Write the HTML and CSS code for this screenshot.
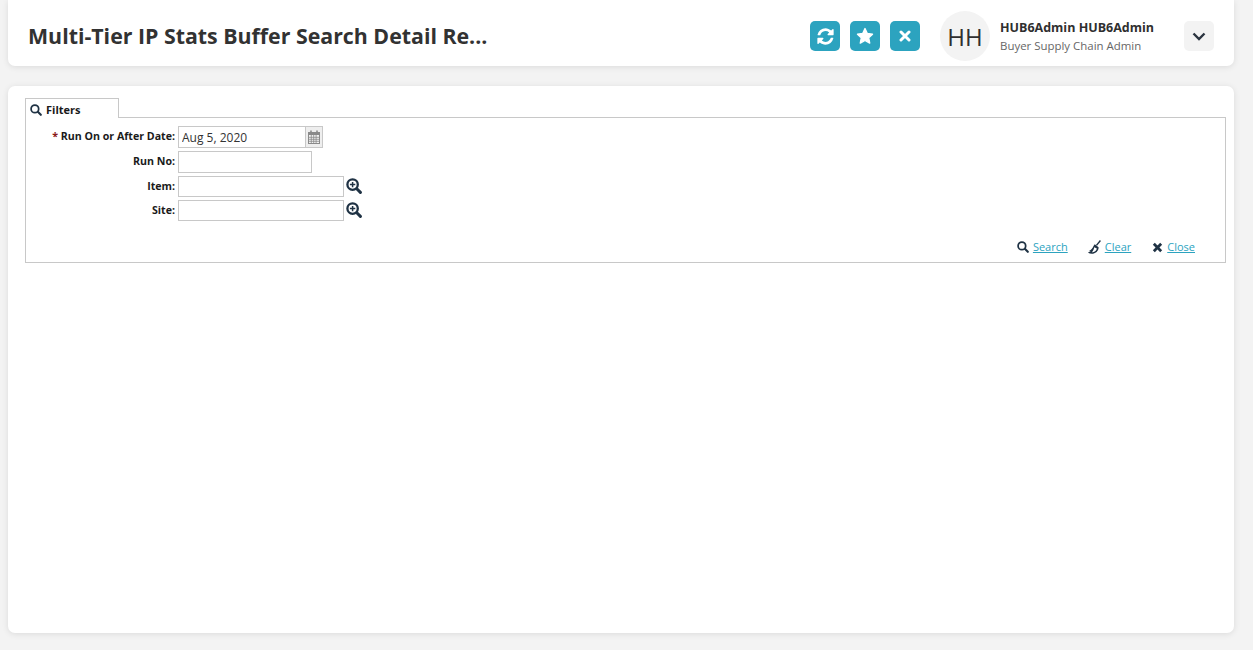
FILE: index.html
```html
<!DOCTYPE html>
<html lang="en">
<head>
<meta charset="utf-8">
<title>Multi-Tier IP Stats Buffer Search Detail Report</title>
<link rel="stylesheet" href="styles.css">
</head>
<body>
<header class="topbar">
  <h1 class="title">Multi-Tier IP Stats Buffer Search Detail Re...</h1>
  <div class="actions">
    <button class="action" type="button" aria-label="Refresh">
      <svg viewBox="0 0 1792 1792" width="19" height="19"><path fill="#fff" d="M1639 1056q0 5-1 7-64 268-268 434.500t-478 166.500q-146 0-282.500-55t-243.500-157l-129 129q-19 19-45 19t-45-19-19-45v-448q0-26 19-45t45-19h448q26 0 45 19t19 45-19 45l-137 137q71 66 161 102t187 36q134 0 250-65t186-179q11-17 53-117 8-23 30-23h192q13 0 22.500 9.500t9.500 22.500zm25-800v448q0 26-19 45t-45 19h-448q-26 0-45-19t-19-45 19-45l138-138q-148-137-349-137-134 0-250 65t-186 179q-11 17-53 117-8 23-30 23h-199q-13 0-22.500-9.500t-9.500-22.500v-7q65-268 270-434.500t480-166.500q146 0 284 55.500t245 156.500l130-129q19-19 45-19t45 19 19 45z"/></svg>
    </button>
    <button class="action" type="button" aria-label="Favorite">
      <svg viewBox="0 0 18 18" width="18" height="18"><path fill="#fff" stroke="#fff" stroke-width="1.400" stroke-linejoin="round" d="M9 1.600l2.300 4.900 5.200.7-3.800 3.600 1 5.300L9 13.500l-4.700 2.600 1-5.300-3.800-3.600 5.200-.7z"/></svg>
    </button>
    <button class="action" type="button" aria-label="Close">
      <svg viewBox="0 0 12 12" width="12" height="12"><path stroke="#fff" stroke-width="3" stroke-linecap="round" d="M2 2l8 8M10 2l-8 8"/></svg>
    </button>
  </div>
  <div class="avatar">HH</div>
  <div class="user">
    <div class="user-name">HUB6Admin HUB6Admin</div>
    <div class="user-role">Buyer Supply Chain Admin</div>
  </div>
  <button class="menu" type="button" aria-label="Menu">
    <svg viewBox="0 0 14 9" width="14" height="9"><path fill="none" stroke="#2b3440" stroke-width="2.400" d="M1.500 1.500L7 7l5.500-5.500"/></svg>
  </button>
</header>

<main class="panel">
  <div class="tab">
    <svg class="tab-icon" viewBox="0 0 13 13" width="12" height="12"><circle cx="5.300" cy="5.300" r="4.100" fill="none" stroke="#1f3244" stroke-width="1.900"/><path stroke="#1f3244" stroke-width="2.300" stroke-linecap="round" d="M8.500 8.500l3.200 3.200"/></svg>
    <span>Filters</span>
  </div>
  <section class="filters">
    <div class="row row-date">
      <label class="label"><span class="req">*</span> Run On or After Date:</label>
      <div class="date">
        <input class="field field-date" type="text" value="Aug 5, 2020">
        <span class="cal">
          <svg viewBox="0 0 14 14" width="14" height="14"><path fill="#8a8a8a" d="M1 2h12v12H1z"/><path fill="#f2f2f2" d="M2 5h10v8H2z"/><path stroke="#8a8a8a" stroke-width=".8" d="M2 7.300h10M2 9.300h10M2 11.300h10M4.300 5v8M6.700 5v8M9.100 5v8"/><path stroke="#8a8a8a" stroke-width="1.600" d="M4 .5v3M10 .5v3"/></svg>
        </span>
      </div>
    </div>
    <div class="row row-no">
      <label class="label">Run No:</label>
      <input class="field field-no" type="text">
    </div>
    <div class="row row-item">
      <label class="label label-low">Item:</label>
      <input class="field field-lookup" type="text">
      <svg class="lookup" viewBox="0 0 16 16" width="16" height="16"><circle cx="6.600" cy="6.600" r="5.200" fill="none" stroke="#1f3244" stroke-width="2.300"/><path stroke="#1f3244" stroke-width="3" stroke-linecap="round" d="M10.800 10.800l3.600 3.600"/><path stroke="#1f3244" stroke-width="1.500" d="M6.600 3.900v5.400M3.900 6.600h5.400"/></svg>
    </div>
    <div class="row row-site">
      <label class="label label-low">Site:</label>
      <input class="field field-lookup" type="text">
      <svg class="lookup" viewBox="0 0 16 16" width="16" height="16"><circle cx="6.600" cy="6.600" r="5.200" fill="none" stroke="#1f3244" stroke-width="2.300"/><path stroke="#1f3244" stroke-width="3" stroke-linecap="round" d="M10.800 10.800l3.600 3.600"/><path stroke="#1f3244" stroke-width="1.500" d="M6.600 3.900v5.400M3.900 6.600h5.400"/></svg>
    </div>
    <div class="links">
      <span class="link-item">
        <svg viewBox="0 0 13 13" width="12" height="12"><circle cx="5.300" cy="5.300" r="4.100" fill="none" stroke="#1f3244" stroke-width="1.900"/><path stroke="#1f3244" stroke-width="2.300" stroke-linecap="round" d="M8.500 8.500l3.200 3.200"/></svg>
        <a href="#">Search</a>
      </span>
      <span class="link-item">
        <svg class="broom" viewBox="0 0 12 13" width="13" height="14"><path fill="none" stroke="#1f3244" stroke-width="1.300" d="M11.500 .5L7.800 5"/><path fill="#1f3244" d="M6.200 4l3.600 2.700c.2 2.500-1.800 5.100-4.400 5.800-1.600.4-3.800.2-5.400-.6l1-.9 1.500-.1-1.400-.9 1.300-.7C4.300 8.200 4.700 5.800 6.200 4z"/><path fill="#fff" d="M5.800 6.800l2.400 1.200c-.4 1.500-1.500 2.700-3 3.200-.6.200-1.200.2-1.700.2 1.300-1 1.800-2.900 2.300-4.600z"/></svg>
        <a href="#">Clear</a>
      </span>
      <span class="link-item">
        <svg viewBox="0 0 12 12" width="11" height="11"><path stroke="#1f3244" stroke-width="3" d="M2 2l8 8M10 2l-8 8"/></svg>
        <a href="#">Close</a>
      </span>
    </div>
  </section>
</main>
</body>
</html>
```
FILE: styles.css
```css
* { box-sizing: border-box; }
html, body { height: 100%; }
body {
  margin: 0;
  padding: 0 19px 17px 8px;
  background: #f3f3f3;
  font-family: "Open Sans", "Liberation Sans", sans-serif;
  color: #2f2f2f;
  display: flex;
  flex-direction: column;
  gap: 20px;
  overflow: hidden;
}
.topbar {
  flex: none;
  height: 66px;
  background: #fff;
  border-radius: 0 0 7px 7px;
  box-shadow: 0 1px 6px rgba(0, 0, 0, .1);
  display: flex;
  align-items: center;
  padding: 6px 20px 0 20px;
}
.title {
  margin: 0;
  flex: 1;
  font-size: 21.33px;
  font-weight: 700;
  line-height: 32px;
  color: #323232;
}
.actions { display: flex; gap: 10px; margin-right: 20px; }
.action {
  width: 30px;
  height: 30px;
  padding: 0;
  border: 0;
  border-radius: 5px;
  background: #2ca3bf;
  display: flex;
  align-items: center;
  justify-content: center;
}
.avatar {
  width: 50px;
  height: 50px;
  border-radius: 50%;
  background: #f3f3f3;
  display: flex;
  align-items: center;
  justify-content: center;
  font-size: 24px;
  color: #2f2f2f;
  margin-right: 10px;
}
.user { width: 184px; padding-top: 2px; }
.user-name { font-size: 12.5px; font-weight: 700; line-height: 18px; color: #2f2f2f; }
.user-role { font-size: 11.45px; line-height: 18px; color: #666; }
.menu {
  width: 30px;
  height: 30px;
  padding: 0;
  border: 0;
  border-radius: 5px;
  background: #f3f3f3;
  display: flex;
  align-items: center;
  justify-content: center;
}
.panel {
  flex: 1;
  background: #fff;
  border-radius: 7px;
  box-shadow: 0 1px 6px rgba(0, 0, 0, .1);
  padding: 12px 8px 0 17px;
}
.tab {
  width: 94px;
  height: 20px;
  border: 1px solid #c8c8c8;
  border-bottom: 0;
  background: #fff;
  display: flex;
  align-items: center;
  gap: 4px;
  padding: 2px 0 0 4px;
  font-size: 11px;
  font-weight: 700;
  color: #1a1a1a;
  position: relative;
  z-index: 1;
  margin-bottom: -1px;
}
.filters {
  height: 146px;
  border: 1px solid #c8c8c8;
  padding-top: 8px;
}
.row { display: flex; align-items: center; }
.row-date { height: 22px; margin-bottom: 3px; }
.row-no { height: 22px; margin-bottom: 3px; }
.row-item { height: 21px; margin-bottom: 3px; }
.row-site { height: 21px; }
.label {
  width: 149px;
  text-align: right;
  font-size: 10.63px;
  font-weight: 700;
  line-height: 14px;
  color: #1a1a1a;
  margin-right: 3px;
  padding-bottom: 3px;
}
.label-low { padding-bottom: 1px; }
.req { color: #8b1a1a; }
.field {
  height: 100%;
  border: 1px solid #c8c8c8;
  padding: 0 3px;
  font-family: inherit;
  font-size: 12px;
  color: #333;
  background: #fff;
  outline: 0;
}
.date { display: flex; height: 100%; }
.field-date { width: 128px; }
.cal {
  width: 17px;
  background: #eeeeee;
  border: 1px solid #c8c8c8;
  border-left: 0;
  display: flex;
  align-items: center;
  justify-content: center;
}
.field-no { width: 134px; }
.field-lookup { width: 166px; }
.lookup { margin: 0 0 2px 2px; }
.links {
  display: flex;
  justify-content: flex-end;
  gap: 21px;
  padding: 18px 30px 0 0;
  font-size: 11px;
  line-height: 16px;
}
.link-item { display: flex; align-items: center; gap: 4px; }
.broom { margin-left: -1px; }
.links a { color: #2ca3bf; text-decoration: underline; }
```
